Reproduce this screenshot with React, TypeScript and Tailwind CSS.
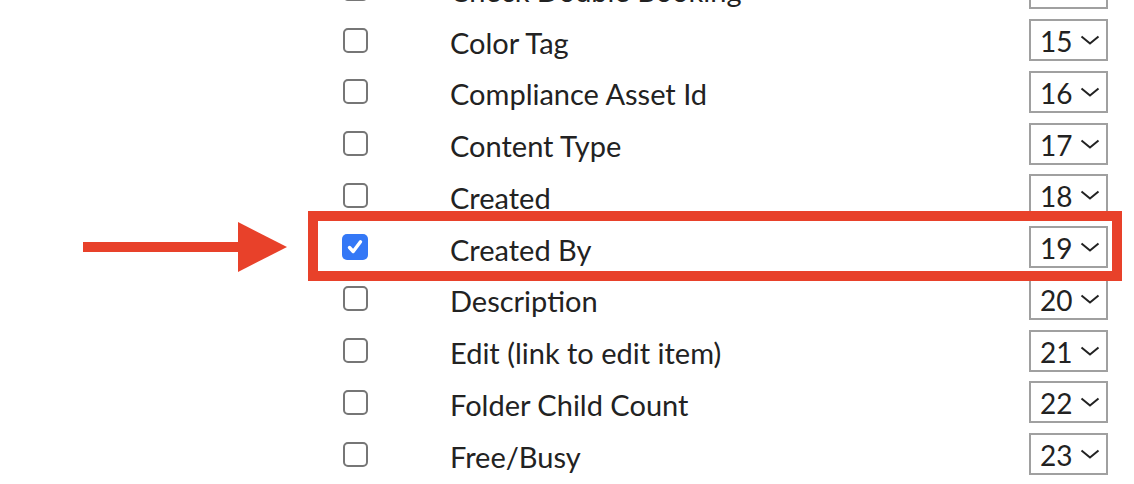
import React from "react";

const rows: { label: string; n: number; checked?: boolean }[] = [
  { label: "Check Double Booking", n: 14 },
  { label: "Color Tag", n: 15 },
  { label: "Compliance Asset Id", n: 16 },
  { label: "Content Type", n: 17 },
  { label: "Created", n: 18 },
  { label: "Created By", n: 19, checked: true },
  { label: "Description", n: 20 },
  { label: "Edit (link to edit item)", n: 21 },
  { label: "Folder Child Count", n: 22 },
  { label: "Free/Busy", n: 23 },
];

function Checkbox({ checked }: { checked?: boolean }) {
  if (checked) {
    return (
      <div className="w-[26px] h-[26px] rounded-[5px] bg-[#3478f6] flex items-center justify-center">
        <svg width="18" height="18" viewBox="0 0 18 18">
          <path d="M3.5 9.5 L7.2 13.5 L14.5 3.8" fill="none" stroke="#fff" strokeWidth="3.4" strokeLinecap="round" strokeLinejoin="round" />
        </svg>
      </div>
    );
  }
  return <div className="w-[25px] h-[25px] rounded-[5px] border-2 border-[#767676] bg-white" />;
}

function Select({ n }: { n: number }) {
  return (
    <div className="w-[79px] h-[42px] border-2 border-[#a0a0a0] flex items-center pl-[9px] bg-white">
      <span className="text-[28px] leading-none text-[#222] pt-[2px]" style={{ fontFamily: "Lato, sans-serif" }}>{n}</span>
      <svg className="ml-[8px]" width="20" height="10" viewBox="0 0 20 10">
        <path d="M1.5 1.5 L10 8.5 L18.5 1.5" fill="none" stroke="#222" strokeWidth="2" />
      </svg>
    </div>
  );
}

export default function App() {
  return (
    <div className="relative w-[1134px] h-[484px] overflow-hidden bg-white" style={{ fontFamily: "Lato, sans-serif" }}>
      <div className="-mt-[37.6px]">
        {rows.map((r) => (
          <div key={r.n} className="h-[51.75px] flex items-center">
            <div className="ml-[342px] w-[26px] flex justify-center">
              <Checkbox checked={r.checked} />
            </div>
            <div className="ml-[82px] text-[29px] leading-none text-[#222] pt-[4px]">{r.label}</div>
            <div className="ml-auto mr-[26px]">
              <Select n={r.n} />
            </div>
          </div>
        ))}
      </div>
      <div className="absolute left-[308px] top-[211px] w-[814px] h-[70px] border-[10px] border-[#e8412a]" />
      <div className="absolute left-[83px] top-[222px] flex items-center h-[50px]">
        <div className="w-[156px] h-[10px] bg-[#e8412a]" />
        <svg width="49" height="50" viewBox="0 0 49 50" className="-ml-px">
          <polygon points="0,0 49,25 0,50" fill="#e8412a" />
        </svg>
      </div>
    </div>
  );
}
